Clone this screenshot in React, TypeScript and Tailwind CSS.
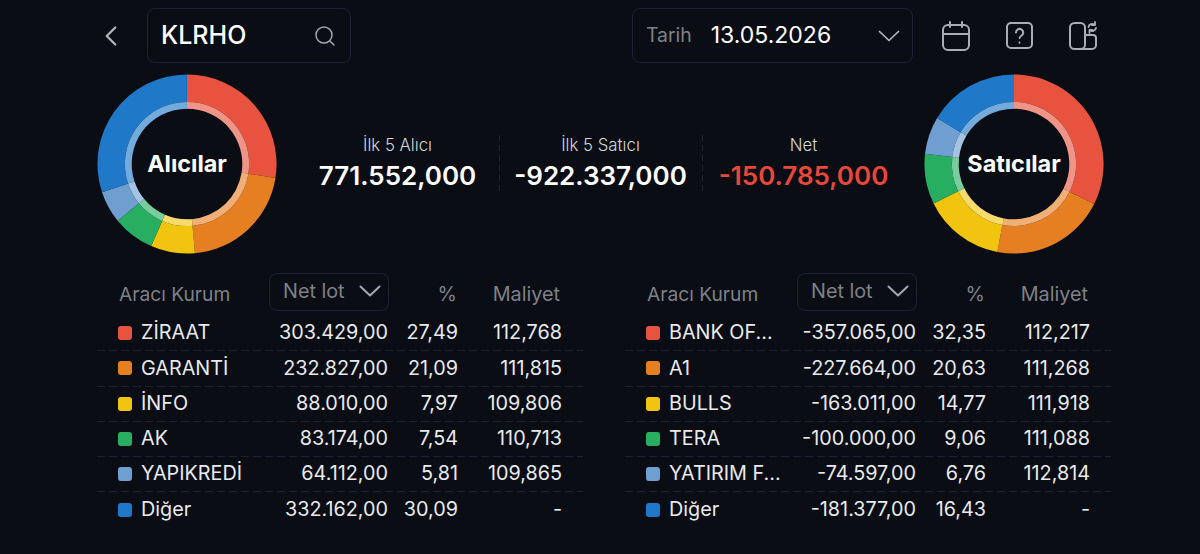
import { ChevronLeft, Search } from "lucide-react";

type Row = { name: string; color: string; lot: string; pct: string; cost: string };

const COLORS = ["#e8533f", "#e67e22", "#f1c40f", "#27ae60", "#6f9ed1", "#1f78c8"];

const buyers: Row[] = [
  { name: "ZİRAAT", color: COLORS[0], lot: "303.429,00", pct: "27,49", cost: "112,768" },
  { name: "GARANTİ", color: COLORS[1], lot: "232.827,00", pct: "21,09", cost: "111,815" },
  { name: "İNFO", color: COLORS[2], lot: "88.010,00", pct: "7,97", cost: "109,806" },
  { name: "AK", color: COLORS[3], lot: "83.174,00", pct: "7,54", cost: "110,713" },
  { name: "YAPIKREDİ", color: COLORS[4], lot: "64.112,00", pct: "5,81", cost: "109,865" },
  { name: "Diğer", color: COLORS[5], lot: "332.162,00", pct: "30,09", cost: "-" },
];

const sellers: Row[] = [
  { name: "BANK OF...", color: COLORS[0], lot: "-357.065,00", pct: "32,35", cost: "112,217" },
  { name: "A1", color: COLORS[1], lot: "-227.664,00", pct: "20,63", cost: "111,268" },
  { name: "BULLS", color: COLORS[2], lot: "-163.011,00", pct: "14,77", cost: "111,918" },
  { name: "TERA", color: COLORS[3], lot: "-100.000,00", pct: "9,06", cost: "111,088" },
  { name: "YATIRIM F...", color: COLORS[4], lot: "-74.597,00", pct: "6,76", cost: "112,814" },
  { name: "Diğer", color: COLORS[5], lot: "-181.377,00", pct: "16,43", cost: "-" },
];

const polar = (r: number, a: number) => {
  const rad = (a * Math.PI) / 50;
  return [100 + r * Math.sin(rad), 100 - r * Math.cos(rad)];
};

const slice = (from: number, to: number, outer: number, inner: number) => {
  const large = to - from > 50 ? 1 : 0;
  const [x1, y1] = polar(outer, from);
  const [x2, y2] = polar(outer, to);
  const [x3, y3] = polar(inner, to);
  const [x4, y4] = polar(inner, from);
  return `M${x1} ${y1}A${outer} ${outer} 0 ${large} 1 ${x2} ${y2}L${x3} ${y3}A${inner} ${inner} 0 ${large} 0 ${x4} ${y4}Z`;
};

const Chevron = ({ sw = 1.8 }: { sw?: number }) => (
  <svg width="22" height="12" viewBox="0 0 22 12" fill="none" stroke="currentColor" strokeWidth={sw} strokeLinecap="round" strokeLinejoin="round">
    <path d="M1.5 1.5 11 10.5l9.5-9" />
  </svg>
);

const Donut = ({ label, rows }: { label: string; rows: Row[] }) => {
  let start = 0;
  const parts = rows.map((r) => {
    const value = parseFloat(r.pct.replace(",", "."));
    const part = { color: r.color, from: start, to: start + value };
    start += value;
    return part;
  });
  return (
    <div className="relative w-[180px] h-[180px] shrink-0 flex items-center justify-center">
      <svg viewBox="0 0 200 200" className="absolute inset-0 w-full h-full">
        {parts.map((p) => (
          <g key={p.color}>
            <path d={slice(p.from, p.to, 99.5, 69)} fill={p.color} />
            <path d={slice(p.from, p.to, 69, 61.5)} fill={p.color} />
            <path d={slice(p.from, p.to, 69, 61.5)} fill="#ffffff" fillOpacity={0.38} />
          </g>
        ))}
      </svg>
      <span className="relative text-[23.4px] font-bold text-white">{label}</span>
    </div>
  );
};

const Stat = ({ label, value, red }: { label: string; value: string; red?: boolean }) => (
  <div className="flex flex-col items-center">
    <span className="text-[16.8px] leading-[20px] text-[#d5d7da] font-light">{label}</span>
    <span className={`text-[26px] leading-[36px] mt-[3px] font-semibold whitespace-nowrap ${red ? "text-[#e8483a]" : "text-white"}`}>
      {value}
    </span>
  </div>
);

const DASH_X = "h-px bg-[repeating-linear-gradient(90deg,#1c2233_0,#1c2233_8px,transparent_8px,transparent_12px)]";
const DASH_Y = "w-px self-stretch bg-[repeating-linear-gradient(180deg,#1c2233_0,#1c2233_6px,transparent_6px,transparent_10px)]";

const Table = ({ rows }: { rows: Row[] }) => (
  <div className="w-[486px] shrink-0">
    <div className="grid grid-cols-[151px_120px_70px_103px] items-center pl-[21px] h-[38px] text-[19.8px] text-[#7d8188]">
      <span className="mt-[4px] text-[19.2px] pl-[1px]">Aracı Kurum</span>
      <div className="h-[38px] border border-[#1c2233] rounded-[8px] flex items-center justify-between pl-[13px] pr-[7px]">
        <span>Net lot</span>
        <span className="text-[#a5a8ae] -mt-[3px]"><Chevron sw={2} /></span>
      </div>
      <span className="text-right mt-[5px] pr-[2px]">%</span>
      <span className="text-right mt-[5px] pr-[2px]">Maliyet</span>
    </div>
    <div className="mt-[5px]">
      {rows.map((r, i) => (
        <div key={r.name}>
          <div className="grid grid-cols-[151px_120px_70px_103px] items-center pl-[21px] h-[34.3px] text-[19.8px] text-[#e9eaec]">
            <div className="flex items-center gap-[9px]">
              <span className="w-[14px] h-[14px] rounded-[3px]" style={{ backgroundColor: r.color }} />
              <span className="whitespace-nowrap">{r.name}</span>
            </div>
            <span className="text-right pr-[1px]">{r.lot}</span>
            <span className="text-right pr-[1px]">{r.pct}</span>
            <span className="text-right">{r.cost}</span>
          </div>
          {i < rows.length - 1 && <div className={DASH_X} />}
        </div>
      ))}
    </div>
  </div>
);

export default function App() {
  return (
    <div className="w-[1200px] h-[554px] overflow-hidden bg-[#0a0d14] font-['Inter',sans-serif] pl-[97px] pt-[8px]">
      {/* top bar */}
      <div className="flex items-center h-[55px]">
        <ChevronLeft size={34} strokeWidth={1.6} className="text-[#b4b7bc] -ml-[3px]" />
        <div className="ml-[19px] w-[204px] h-[55px] border border-[#1c2233] rounded-[8px] flex items-center justify-between pl-[13px] pr-[13px]">
          <span className="text-[25px] font-medium text-white">KLRHO</span>
          <Search size={24} strokeWidth={1.5} className="text-[#a5a8ae]" />
        </div>
        <div className="ml-[281px] w-[281px] h-[55px] border border-[#1c2233] rounded-[8px] flex items-center pl-[13px] pr-[12px]">
          <span className="text-[19.4px] text-[#7d8188]">Tarih</span>
          <span className="ml-[19px] text-[23px] text-white">13.05.2026</span>
          <span className="ml-auto text-[#b4b7bc]"><Chevron sw={1.7} /></span>
        </div>
        <div className="ml-[28px] flex items-center gap-[34px] text-[#a9adb4]">
          <svg width="30" height="32" viewBox="0 0 30 32" fill="none" stroke="currentColor" strokeWidth="2" strokeLinecap="round">
            <rect x="2" y="5" width="26" height="25" rx="5" />
            <path d="M2 14h26M9 2v5M21 2v5" />
          </svg>
          <svg width="29" height="28" viewBox="0 0 29 28" fill="none" stroke="currentColor" strokeWidth="2" strokeLinecap="round">
            <rect x="2" y="1" width="25" height="25" rx="4" />
            <path d="M11 10.5a3.6 3.6 0 1 1 5.6 3c-1.3.8-2 1.4-2 2.6" />
            <path d="M14.5 20.5v.2" />
          </svg>
          <svg width="30" height="30" viewBox="0 0 30 30" fill="none" stroke="currentColor" strokeWidth="2" strokeLinecap="round" strokeLinejoin="round">
            <rect x="2" y="2" width="15" height="26" rx="4.5" />
            <path d="M17 14h8a3 3 0 0 1 3 3v7a4 4 0 0 1-4 4H12" />
            <path d="M20.5 6a3.6 3.6 0 0 1 6-2M28 7a3.6 3.6 0 0 1-6 2" strokeWidth="1.8" />
            <path d="M27 1v3h-3M21.5 12v-3h3" strokeWidth="1.8" />
          </svg>
        </div>
      </div>

      {/* summary */}
      <div className="flex items-center w-[1007px] mt-[11px] h-[180px]">
        <Donut label="Alıcılar" rows={buyers} />
        <div className="flex-1 flex items-center justify-center">
          <div className="w-[202px]"><Stat label="İlk 5 Alıcı" value="771.552,000" /></div>
          <div className={DASH_Y} />
          <div className="w-[202px]"><Stat label="İlk 5 Satıcı" value="-922.337,000" /></div>
          <div className={DASH_Y} />
          <div className="w-[202px]"><Stat label="Net" value="-150.785,000" red /></div>
        </div>
        <Donut label="Satıcılar" rows={sellers} />
      </div>

      {/* tables */}
      <div className="flex gap-[42px] mt-[19px]">
        <Table rows={buyers} />
        <Table rows={sellers} />
      </div>
    </div>
  );
}
